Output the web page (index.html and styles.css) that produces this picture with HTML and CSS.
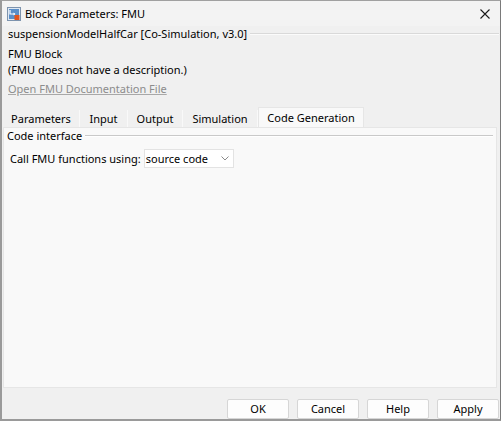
FILE: index.html
```html
<!DOCTYPE html>
<html>
<head>
<meta charset="utf-8">
<link rel="stylesheet" href="styles.css">
</head>
<body>
<div class="window">
  <div class="titlebar">
    <svg class="app-icon" width="14" height="14" viewBox="0 0 14 14">
      <rect x="0.5" y="0.5" width="13" height="13" fill="#dfe8f2" stroke="#7d93ad"/>
      <rect x="2" y="2" width="10" height="10" fill="#5b8fc9"/>
      <path d="M3 3 L3 7 L8 7" fill="none" stroke="#fff" stroke-width="1.2"/>
      <path d="M6.5 5.5 L8.5 7 L6.5 8.5 Z" fill="#fff"/>
      <rect x="7.5" y="8" width="5" height="5" fill="#e2541f"/>
    </svg>
    <span class="title">Block Parameters: FMU</span>
    <svg class="close" width="12" height="12" viewBox="0 0 12 12">
      <path d="M1.5 1.5 L10.5 10.5 M10.5 1.5 L1.5 10.5" stroke="#1a1a1a" stroke-width="1.1"/>
    </svg>
  </div>

  <div class="header">
    <div class="group-title">suspensionModelHalfCar [Co-Simulation, v3.0]</div>
    <div class="desc first">FMU Block</div>
    <div class="desc">(FMU does not have a description.)</div>
    <div class="doc-link">Open FMU Documentation File</div>
  </div>

  <div class="tabs">
    <div class="tab-row">
      <div class="tab t1">Parameters</div>
      <div class="tab t2">Input</div>
      <div class="tab t3">Output</div>
      <div class="tab t4">Simulation</div>
      <div class="tab t5 active">Code Generation</div>
    </div>
    <div class="panel">
      <div class="group-title panel-title">Code interface</div>
      <div class="field">
        <span class="label">Call FMU functions using:</span>
        <div class="select">
          <span>source code</span>
          <svg class="chev" width="8" height="5" viewBox="0 0 8 5">
            <path d="M0.5 0.5 L4 4 L7.5 0.5" fill="none" stroke="#8a8a8a" stroke-width="1"/>
          </svg>
        </div>
      </div>
    </div>
  </div>

  <div class="footer">
    <button class="btn">OK</button>
    <button class="btn">Cancel</button>
    <button class="btn">Help</button>
    <button class="btn">Apply</button>
  </div>
</div>
</body>
</html>
```

FILE: styles.css
```css
html, body {
  margin: 0;
  padding: 0;
  background: #f0f0f0;
}

body {
  font-family: "Noto Sans", "Open Sans", sans-serif;
  font-size: 11px;
  color: #000;
}

.window {
  width: 501px;
  height: 421px;
  box-sizing: border-box;
  background: #f0f0f0;
  border-left: 2px solid #9a9a9a;
  border-right: 1px solid #7a7a7a;
  border-bottom: 2px solid #9a9a9a;
  border-top: 1px solid #a0a0a0;
  display: flex;
  flex-direction: column;
}

.titlebar {
  height: 25px;
  background: #f3f3f3;
  display: flex;
  align-items: center;
  padding: 0 9px 0 5px;
}

.app-icon {
  flex: none;
  margin-right: 4px;
}

.title {
  flex: 1;
  line-height: 16px;
}

.close {
  flex: none;
}

.header {
  padding: 0 1px 0 6px;
}

.group-title {
  display: flex;
  align-items: center;
  height: 16px;
  line-height: 16px;
  white-space: nowrap;
}

.group-title::after {
  content: "";
  flex: 1;
  height: 0;
  border-top: 1px solid #d9d9d9;
  border-bottom: 1px solid #fbfbfb;
  margin-left: 3px;
}

.desc {
  line-height: 16px;
}

.desc.first {
  margin-top: 4px;
}

.doc-link {
  margin-top: 3px;
  line-height: 16px;
  color: #8c8c8c;
  text-decoration: underline;
  text-decoration-color: #a8a8a8;
}

.tabs {
  margin: 10px 3px 0 1px;
  display: flex;
  flex-direction: column;
}

.tab-row {
  display: flex;
  align-items: flex-end;
  height: 20px;
}

.tab {
  height: 17px;
  line-height: 17px;
  text-align: center;
  box-sizing: border-box;
  border-right: 1px solid #f9f9f9;
}

.t1 { width: 77px; }
.t2 { width: 48px; }
.t3 { width: 55px; }
.t4 { width: 75px; }
.t5 { width: 106px; }

.tab.active {
  height: 20px;
  line-height: 20px;
  background: #f9f9f9;
  border: 1px solid #e6e6e6;
  border-bottom: none;
}

.panel {
  height: 261px;
  box-sizing: border-box;
  background: #f9f9f9;
  border: 1px solid #e6e6e6;
  padding: 0 3px 0 3px;
}

.panel-title::after {
  border-top: 1px solid #c9c9c9;
  border-bottom: 1px solid #ffffff;
}

.field {
  display: flex;
  align-items: center;
  margin-top: 5px;
  padding-left: 3px;
}

.label {
  line-height: 16px;
}

.select {
  margin-left: 3px;
  width: 90px;
  height: 19px;
  box-sizing: border-box;
  background: #ffffff;
  border: 1px solid #e3e3e3;
  display: flex;
  align-items: center;
  justify-content: space-between;
  padding: 0 4px 0 1px;
}

.chev {
  flex: none;
}

.footer {
  margin-top: auto;
  display: flex;
  justify-content: flex-end;
  gap: 8px;
  padding: 0 1px 0 0;
}

.btn {
  width: 62px;
  height: 20px;
  box-sizing: border-box;
  background: #fdfdfd;
  border: 1px solid #d6d6d6;
  border-radius: 2px;
  font-family: inherit;
  font-size: 11px;
  color: #000;
  padding: 0;
  line-height: 18px;
}
```
